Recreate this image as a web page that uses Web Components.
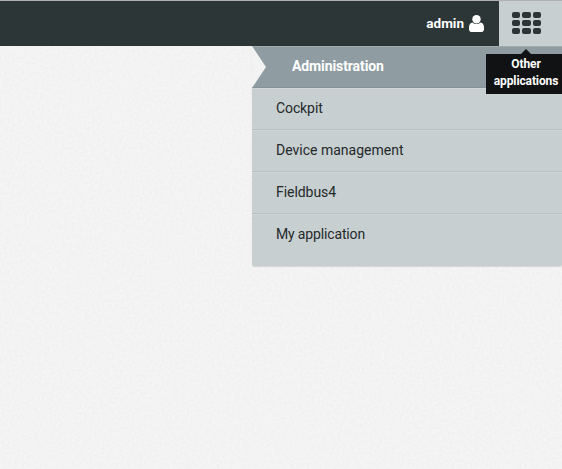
<!DOCTYPE html>
<html lang="en"><head><meta charset="utf-8"><title>Applications</title>
<style>html,body{margin:0;height:100%;overflow:hidden;background:#f3f3f3}</style></head>
<body><app-shell></app-shell>
<script>
const define=(name,html)=>customElements.define(name,class extends HTMLElement{
 constructor(){super();this.attachShadow({mode:'open'}).innerHTML=html}
});
define('paper-grain',`<style>:host{display:block}svg{display:block;width:100%;height:100%}</style>
<svg aria-hidden="true"><filter id="g" x="0" y="0" width="100%" height="100%" color-interpolation-filters="sRGB"><feTurbulence type="fractalNoise" baseFrequency=".4" numOctaves="2" seed="4"/><feColorMatrix values=".04 0 0 0 .932 .04 0 0 0 .932 .04 0 0 0 .932 0 0 0 0 1"/></filter><rect width="100%" height="100%" filter="url(#g)"/></svg>`);
define('user-menu',`<style>:host{display:flex;align-items:center;height:45px;padding-right:15px;gap:5px;color:#fff;font-size:13.5px;font-weight:700}span{padding-bottom:1px}svg{display:block}</style>
<span><slot></slot></span><svg width="15" height="17" viewBox="0 0 15 17" fill="#fff"><path d="M3.6 7.5C1.2 7.6 0 9.8 0 13v1.2C0 16.1 1.2 17 3 17h9c1.8 0 3-.9 3-2.8V13c0-3.2-1.2-5.4-3.6-5.5-1 1-2.3 1.6-3.9 1.6s-2.9-.6-3.9-1.6z"/><circle cx="7.5" cy="4.2" r="4.2"/></svg>`);
define('app-switch',`<style>:host{display:flex;box-sizing:border-box;width:63px;height:45px;padding:11px 0 0 13px;background:#c7cfd1}.grid{display:grid;grid-template-columns:repeat(3,8.3px);grid-template-rows:repeat(3,6.2px);gap:1.7px 2px;height:22px}i{background:#2c3536;border-radius:2px}</style>
<div class="grid"><i></i><i></i><i></i><i></i><i></i><i></i><i></i><i></i><i></i></div>`);
define('top-bar',`<style>:host{display:flex;justify-content:flex-end;box-sizing:border-box;height:46px;border-top:1px solid #b1b1b4;background:#2d3637}</style><slot></slot>`);
define('menu-item',`<style>:host{display:flex;align-items:center;box-sizing:border-box;height:42px;padding:0 24px 2px;border-top:1px solid #d0d6d8;border-bottom:1px solid #b6bfc2;color:#25292a}
:host([last]){border-bottom-color:transparent}
:host([active]){padding-left:40px;color:#fff;font-weight:700;background:#8f9da2;border-top-color:#a0acb0;border-bottom-color:#84949a;clip-path:polygon(0 0,100% 0,100% 100%,0 100%,14px 50%)}</style><slot></slot>`);
define('app-menu',`<style>:host{display:block;box-sizing:border-box;width:310px;height:220px;background:linear-gradient(transparent 42px,#c7cfd1 42px);border-radius:0 0 2px 2px;box-shadow:0 1px 1px #0002}</style><slot></slot>`);
define('tool-tip',`<style>:host{display:block;box-sizing:border-box;width:80px;height:40px;padding:2px 0;background:#101213;color:#fff;text-align:center;font-size:12px;font-weight:700;letter-spacing:-.12px;line-height:17px}
:host::before{content:"";position:absolute;top:-5px;left:35px;border:5px solid transparent;border-top:0;border-bottom-color:#101213}</style><slot></slot>`);
define('app-shell',`<style>:host{display:block;position:relative;height:469px;overflow:hidden;font:14px/20px Roboto,"Liberation Sans",sans-serif}
paper-grain{position:absolute;inset:0}.page{position:relative;display:grid;justify-items:end}top-bar{width:100%}tool-tip{position:absolute;left:486px;top:54px}</style>
<paper-grain></paper-grain><div class="page"><top-bar><user-menu>admin</user-menu><app-switch></app-switch></top-bar>
<app-menu><menu-item active style="letter-spacing:-.1px">Administration</menu-item><menu-item style="letter-spacing:-.1px">Cockpit</menu-item><menu-item>Device management</menu-item><menu-item style="letter-spacing:-.05px">Fieldbus4</menu-item><menu-item last style="letter-spacing:-.15px">My application</menu-item></app-menu></div>
<tool-tip><div>Other</div><div>applications</div></tool-tip>`);
</script></body></html>
